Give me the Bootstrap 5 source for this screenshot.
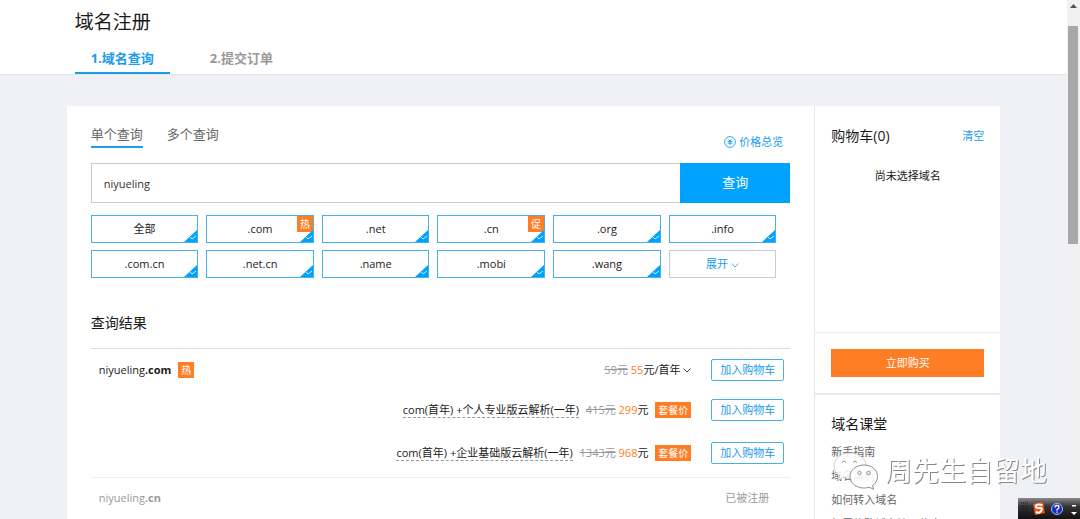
<!DOCTYPE html>
<html lang="zh-CN">
<head>
<meta charset="utf-8">
<meta name="viewport" content="width=device-width, initial-scale=1">
<title>域名注册</title>
<link href="https://cdn.jsdelivr.net/npm/bootstrap@5.3.0/dist/css/bootstrap.min.css" rel="stylesheet">
<style>
:root{--blue:#00a2ff;--link:#1b9cec;--orange:#ff7d24}
body{font-family:"Open Sans","Noto Sans CJK SC",sans-serif;font-size:11px;line-height:16px;color:#1a1a1a;background:#eff1f5;height:100vh;overflow:hidden;padding-right:13px}
a{color:var(--link);text-decoration:none}
button{line-height:16px}
.wrap{width:87.5%;max-width:1200px}
.topbar{border-bottom:1px solid #e3e7ed}
.topbar h1{font-size:19px;line-height:28px;font-weight:400}
.steps .nav-link{font-size:13px;line-height:20px;font-weight:700;color:#999;padding:4px 16px;border-bottom:2px solid transparent}
.steps .nav-link.active{color:var(--link);border-color:var(--link)}
.page{margin-top:31px}
.panel{padding:16px 24px}
.modebar{min-height:28px}
.modes .nav-link{font-size:13px;line-height:20px;color:#666;padding:2px 0;border-bottom:2px solid transparent}
.modes .nav-link.active{border-color:var(--link)}
.price-link{gap:3px;padding-right:7px}
.search{margin:13px 0 12px}
.search .form-control{height:40px;font-size:11px;border:1px solid #ccc;border-right:0;border-radius:0;padding:0 12px;color:#333}
.search .btn{width:110px;font-size:13px;background:var(--blue);color:#fff;border-radius:0;border:0}
.suffixes{display:grid;grid-template-columns:repeat(6,1fr);gap:7px 8px;padding-right:14px}
.suffix{height:28px;border:1px solid #47afea;background:#fff;color:#1a1a1a;padding:0}
.suffix .tick{position:absolute;right:0;bottom:0;width:13px;height:12px}
.suffix .flag{position:absolute;right:0;top:0}
.suffix.more{border-color:#ccc;color:var(--link)}
.flag,.tagbox{background:var(--orange);color:#fff;font-size:10px;line-height:16px;text-align:center;display:inline-block}
.flag{width:16px}
.tagbox{padding:0 3px}
h2{font-size:14px;line-height:20px;font-weight:400}
.results-title{margin:35px 0 15px}
.results{border-top:1px solid #ddd}
.results td,.results th{padding:0;vertical-align:middle;font-weight:400}
.results .act{width:99px;padding-right:6px;text-align:right}
.results .act .btn{width:73px;font-size:11px;line-height:16px;padding:2px 0;border:1px solid #47afea;border-radius:2px;color:var(--link);background:#fff}
.r-main{height:42px}.r-pack{height:39px}.r-last{height:48px}
.r-taken{height:40px;border-top:1px solid #eee;color:#999}
.results .taken{padding-right:21px}
.results .name{padding-left:8px;text-align:left}
del{color:#999}
.now{color:var(--orange)}
.deal{border-bottom:1px dashed #999}
.side{flex:0 0 186px;border-left:1px solid #e4e6ea}
.side section{padding:16px}
.side .cart{height:227px;border-bottom:1px solid #eee;padding-top:20px}
.empty{margin-top:22px}
.buy{border-bottom:2px solid #e8e9ec}
.buy .btn{font-size:11px;line-height:16px;padding:6px 0;background:var(--orange);color:#fff;border:0;border-radius:0}
.side .lessons{padding-top:19px}
.lessons h2{margin-bottom:6px}
.lessons li{line-height:24px}
.lessons a{color:#666}
.rail{width:13px;background:#f1f1f1}
.rail .thumb{margin:26px 2px 0 1px;height:218px;background:#a8a8a8}
.rail svg{position:absolute;top:4px;left:3px}
.sign{position:fixed;right:33px;bottom:28px;gap:6px;font-size:27px;line-height:40px;color:#fff;text-shadow:1px 1px 0 #888;pointer-events:none}
.ime{position:fixed;right:0;bottom:0;width:62px;height:21px;background:linear-gradient(#8a8a8a,#333 40%,#111)}
</style>
</head>
<body>
<svg class="d-none">
  <symbol id="tick" viewBox="0 0 13 12"><path d="M13 0v12H0z" fill="#00a2ff"/><path d="M6 7l2 2 4-3" fill="none" stroke="#fff" stroke-width=".8"/></symbol>
  <symbol id="chev" viewBox="0 0 8 5"><path d="M.5.5L4 4 7.500.5" fill="none" stroke="currentColor" stroke-width=".8"/></symbol>
</svg>
<header class="topbar bg-white me-n3">
  <div class="wrap mx-auto px-2">
    <h1 class="mb-0 pt-2">域名注册</h1>
    <nav class="nav steps gap-4 mt-2">
      <a class="nav-link active" href="#">1.域名查询</a>
      <a class="nav-link" href="#">2.提交订单</a>
    </nav>
  </div>
</header>
<div class="wrap page mx-auto d-flex bg-white">
  <main class="panel flex-fill">
    <div class="modebar d-flex justify-content-between align-items-start">
      <nav class="nav modes gap-4">
        <a class="nav-link active" href="#">单个查询</a>
        <a class="nav-link" href="#">多个查询</a>
      </nav>
      <a href="#" class="price-link d-flex align-items-center align-self-end"><svg width="12" height="12" viewBox="0 0 12 12" fill="none" stroke="#1b9cec"><circle cx="6" cy="6" r="5.4" stroke-width=".9"/><path d="M3.500 5.500h5M3.500 7.200h5M4.500 3.500L6 5l1.500-1.500M6 5v4" stroke-width=".9"/></svg>价格总览</a>
    </div>
    <form class="search d-flex">
      <input class="form-control" type="text" value="niyueling" aria-label="域名">
      <button class="btn flex-shrink-0" type="button">查询</button>
    </form>
    <div class="suffixes">
      <button class="suffix position-relative">全部<svg class="tick"><use href="#tick"/></svg></button>
      <button class="suffix position-relative">.com<span class="flag">热</span><svg class="tick"><use href="#tick"/></svg></button>
      <button class="suffix position-relative">.net<svg class="tick"><use href="#tick"/></svg></button>
      <button class="suffix position-relative">.cn<span class="flag">促</span><svg class="tick"><use href="#tick"/></svg></button>
      <button class="suffix position-relative">.org<svg class="tick"><use href="#tick"/></svg></button>
      <button class="suffix position-relative">.info<svg class="tick"><use href="#tick"/></svg></button>
      <button class="suffix position-relative">.com.cn<svg class="tick"><use href="#tick"/></svg></button>
      <button class="suffix position-relative">.net.cn<svg class="tick"><use href="#tick"/></svg></button>
      <button class="suffix position-relative">.name<svg class="tick"><use href="#tick"/></svg></button>
      <button class="suffix position-relative">.mobi<svg class="tick"><use href="#tick"/></svg></button>
      <button class="suffix position-relative">.wang<svg class="tick"><use href="#tick"/></svg></button>
      <button class="suffix more">展开 <svg width="8" height="5"><use href="#chev"/></svg></button>
    </div>
    <h2 class="results-title">查询结果</h2>
    <table class="results w-100">
      <tr class="r-main">
        <th class="name" scope="row">niyueling<b>.com</b> <span class="flag ms-1">热</span></th>
        <td class="text-end"><del>59元</del> <span class="now">55</span>元/首年 <svg width="8" height="5"><use href="#chev"/></svg></td>
        <td class="act"><button class="btn">加入购物车</button></td>
      </tr>
      <tr class="r-pack">
        <td colspan="2" class="text-end"><span class="deal me-1">com(首年) +个人专业版云解析(一年)</span> <del>415元</del> <span class="now">299</span>元 <span class="tagbox ms-1">套餐价</span></td>
        <td class="act"><button class="btn">加入购物车</button></td>
      </tr>
      <tr class="r-last">
        <td colspan="2" class="text-end"><span class="deal me-1">com(首年) +企业基础版云解析(一年)</span> <del>1343元</del> <span class="now">968</span>元 <span class="tagbox ms-1">套餐价</span></td>
        <td class="act"><button class="btn">加入购物车</button></td>
      </tr>
      <tr class="r-taken">
        <th class="name" scope="row">niyueling<b>.cn</b></th>
        <td></td>
        <td class="act taken">已被注册</td>
      </tr>
    </table>
  </main>
  <aside class="side">
    <section class="cart">
      <div class="d-flex justify-content-between align-items-center">
        <h2 class="mb-0">购物车(0)</h2><a href="#">清空</a>
      </div>
      <p class="text-center mb-0 empty">尚未选择域名</p>
    </section>
    <section class="buy"><button class="btn w-100">立即购买</button></section>
    <section class="lessons">
      <h2>域名课堂</h2>
      <ul class="list-unstyled mb-0">
        <li><a href="#">新手指南</a></li>
        <li><a href="#">域名解析</a></li>
        <li><a href="#">如何转入域名</a></li>
        <li><a href="#">如需修改域名注册信息</a></li>
      </ul>
    </section>
  </aside>
</div>
<div class="rail position-fixed top-0 bottom-0 end-0">
  <svg width="7" height="5" viewBox="0 0 7 5"><path d="M3.500 0L7 4H0z" fill="#505050"/></svg>
  <div class="thumb"></div>
</div>
<div class="sign d-flex align-items-center">
  <svg width="46" height="38" viewBox="0 0 46 38" stroke="#8f8f8f" fill="#fff" fill-opacity=".88">
    <path d="M17 1C8 1 1 6.500 1 14c0 4 2 7.500 5.500 9.800L5 28l5.500-2.800c2 .6 4 1 6.500 1 9 0 16-5.500 16-12.600S26 1 17 1z" stroke="#c4c4c4" stroke-width=".8"/>
    <path d="M31 13c-8 0-14 5-14 11.500S23 36 31 36c2 0 3.500-.3 5-.8l4.500 2-1-3.700c3.200-2 5-5.200 5-9C44.500 18 39 13 31 13z"/>
    <path d="M9 10.500q2-3 4 0M20 10.500q2-3 4 0" fill="none"/>
    <circle cx="26.500" cy="21" r="1.700"/><circle cx="35.500" cy="21" r="1.700"/>
  </svg>
  <span>周先生自留地</span>
</div>
<div class="ime">
  <svg class="w-100 h-100" viewBox="0 0 62 21">
    <path d="M3 5h7M3 8h7M3 11h7M3 14h7M3 17h7" stroke="#111" stroke-dasharray="1 1"/>
    <path d="M15 6l10-2 2 11-10 2z" fill="#f2511b"/>
    <path d="M24.500 7q-6-1.500-6.500 1t3.500 2 1.500 3-5 .5" fill="none" stroke="#fff" stroke-width="2"/>
    <circle cx="39" cy="11" r="5.500" fill="#1a2fb4" stroke="#aab4ee"/>
    <path d="M37 9.500q0-2 2-2t2 1.500-2 2.500v1M39 13.500v1.300" fill="none" stroke="#fff" stroke-width="1.300"/>
    <path d="M54 7h4v1.500h-4zM53 14h6l-3 3z" fill="#fff"/>
  </svg>
</div>
<script src="https://cdn.jsdelivr.net/npm/bootstrap@5.3.0/dist/js/bootstrap.bundle.min.js"></script>
</body>
</html>
